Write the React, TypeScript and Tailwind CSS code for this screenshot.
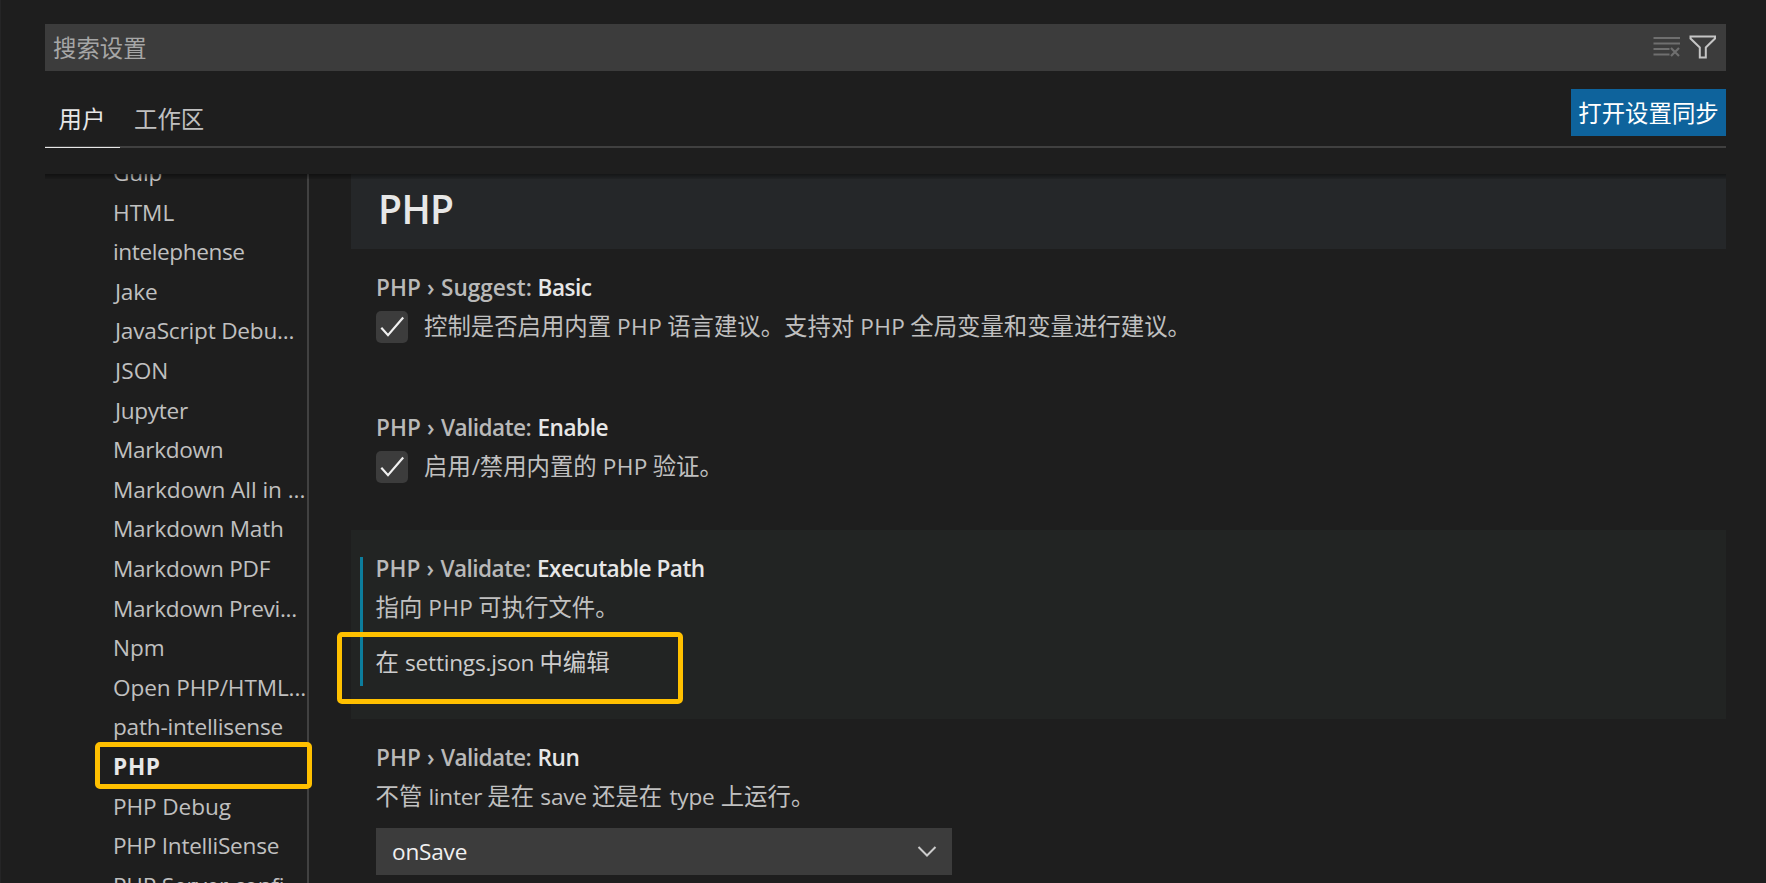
import type { ReactNode } from 'react';

const tocItems = [
  { label: 'Gulp', spacing: 'tracking-[-0.2px]' },
  { label: 'HTML', spacing: 'tracking-[0px]' },
  { label: 'intelephense', spacing: 'tracking-[-0.4px]' },
  { label: 'Jake', spacing: 'pl-[2px] tracking-[-0.2px]' },
  { label: 'JavaScript Debu...', spacing: 'pl-[2px] tracking-[-0.2px]' },
  { label: 'JSON', spacing: 'pl-[2px] tracking-[0.1px]' },
  { label: 'Jupyter', spacing: 'pl-[2px] tracking-[-0.3px]' },
  { label: 'Markdown', spacing: 'tracking-[-0.3px]' },
  { label: 'Markdown All in ...', spacing: 'tracking-[-0.06px]' },
  { label: 'Markdown Math', spacing: 'tracking-[-0.21px]' },
  { label: 'Markdown PDF', spacing: 'tracking-[-0.26px]' },
  { label: 'Markdown Previ...', spacing: 'tracking-[-0.3px]' },
  { label: 'Npm', spacing: 'tracking-[0px]' },
  { label: 'Open PHP/HTML...', spacing: 'tracking-[-0.12px]' },
  { label: 'path-intellisense', spacing: 'tracking-[-0.22px]' },
  { label: 'PHP', spacing: 'tracking-[0.7px]', selected: true },
  { label: 'PHP Debug', spacing: 'tracking-[-0.1px]' },
  { label: 'PHP IntelliSense', spacing: 'tracking-[-0.25px]' },
  { label: 'PHP Server confi...', spacing: 'tracking-[-0.22px]' },
];

function ClearIcon() {
  return (
    <svg width="28" height="24" viewBox="0 0 28 24" fill="none" stroke="#6f6f6f" strokeWidth="2">
      <path d="M0.5 3H27M0.5 8.5H27M0.5 14H16.5M0.5 19.5H16.5" />
      <path d="M18 13L26 21M26 13L18 21" strokeWidth="2.2" />
    </svg>
  );
}

function FilterIcon() {
  return (
    <svg width="28" height="24" viewBox="0 0 28 24" fill="none" stroke="#c5c5c5" strokeWidth="2">
      <path d="M1.5 1.5H26V3.5L16.8 12.5V22.5H10.8V12.5L1.5 3.5Z" />
    </svg>
  );
}

function Checkbox() {
  return (
    <span className="mt-1 flex size-8 shrink-0 rounded-[5px] bg-[#3c3c3c]">
      <svg width="32" height="32" viewBox="0 0 32 32" fill="none" stroke="#f0f0f0" strokeWidth="2.2">
        <path d="M5.3 16.7L12 24.2L27.2 6.5" />
      </svg>
    </span>
  );
}

function Latin({ width, children }: { width: string; children: ReactNode }) {
  return (
    <span className={`inline-block pl-px text-center text-[22.6px] ${width}`}>{children}</span>
  );
}

type TitleProps = { group: string; groupSpacing: string; name: string; spacing: string };

function Title({ group, groupSpacing, name, spacing }: TitleProps) {
  return (
    <h3 className="flex h-[38px] text-[22.6px] leading-[38px] font-semibold whitespace-nowrap text-[#b9b9b9]">
      <span className="w-[50px] tracking-[0.1px]">PHP</span>
      <span className="w-[15px] pl-px">›</span>
      <span className={`w-[96.5px] ${groupSpacing}`}>{group}</span>
      <span className={`text-[#e7e7e7] ${spacing}`}>{name}</span>
    </h3>
  );
}

export default function App() {
  return (
    <div className="relative flex h-[883px] w-[1766px] flex-col overflow-hidden border-l border-[#252526] bg-[#1e1e1e] pr-10 pl-11 font-['Open_Sans','Noto_Sans_CJK_SC',sans-serif] text-[23.4px] text-[#c0c0c0]">
      <div className="mt-6 flex h-[47px] shrink-0 items-center justify-between bg-[#3c3c3c] pr-[9px] pl-2">
        <span className="pt-px leading-[48px] text-[#a6a6a6]">搜索设置</span>
        <div className="flex items-center gap-2 pb-[2px]">
          <ClearIcon />
          <FilterIcon />
        </div>
      </div>

      <div className="flex h-[77px] shrink-0 justify-between border-b-2 border-[#404040]">
        <div className="flex pt-[21px]">
          <div className="-mb-[2px] w-[75px] border-b-[1.5px] border-[#e7e7e7] pl-[13.5px] leading-[54px] text-[#e7e7e7]">
            用户
          </div>
          <div className="pl-[14px] leading-[54px]">工作区</div>
        </div>
        <button className="mt-[18px] h-[47px] w-[155px] bg-[#0e639c] pt-px text-center leading-[47px] text-white">
          打开设置同步
        </button>
      </div>

      <div className="relative mt-[26px] flex h-[709px] overflow-hidden">
        <nav className="w-[264px] shrink-0 overflow-hidden border-r-2 border-[#414141] pl-[68px]">
          <ul className="-mt-[21px] text-[22.6px]">
            {tocItems.map((item) => (
              <li
                key={item.label}
                className={`h-[39.6px] leading-[39.6px] whitespace-nowrap ${item.spacing} ${item.selected ? 'font-bold text-[#e7e7e7]' : ''}`}
              >
                {item.label}
              </li>
            ))}
          </ul>
        </nav>

        <main className="ml-[42px] flex flex-1 flex-col whitespace-nowrap">
          <h2 className="h-[75px] shrink-0 bg-[#252729] pl-[27px] text-[39px] leading-[70px] font-semibold tracking-[-0.6px] text-[#e7e7e7]">
            PHP
          </h2>

          <section className="h-[140.5px] shrink-0 pt-[20px] pl-[25px]">
            <Title group="Suggest:" groupSpacing="tracking-[0px]" name="Basic" spacing="tracking-[-0.5px]" />
            <div className="flex gap-4 leading-[38px]">
              <Checkbox />
              <p className="h-[38px]">
                控制是否启用内置<Latin width="w-[56px] tracking-[0.4px]">PHP</Latin>语言建议。支持对
                <Latin width="w-[56px] tracking-[0.4px]">PHP</Latin>全局变量和变量进行建议。
              </p>
            </div>
          </section>

          <section className="h-[140.5px] shrink-0 pt-[19.5px] pl-[25px]">
            <Title group="Validate:" groupSpacing="tracking-[-0.55px]" name="Enable" spacing="tracking-[-0.5px]" />
            <div className="flex gap-4 leading-[38px]">
              <Checkbox />
              <p className="h-[38px]">
                启用<Latin width="w-[9px]">/</Latin>禁用内置的
                <Latin width="w-[56px] tracking-[0.4px]">PHP</Latin>验证。
              </p>
            </div>
          </section>

          <section className="relative h-[189px] shrink-0 bg-[#222423] pt-[20px] pl-[24.5px]">
            <div className="absolute top-[27px] left-[9px] h-[129px] w-[3px] bg-[#0c7d9d]" />
            <Title group="Validate:" groupSpacing="tracking-[-0.55px]" name="Executable Path" spacing="tracking-[-0.5px]" />
            <p className="h-[38px] leading-[38px]">
              指向<Latin width="w-[56px] tracking-[0.4px]">PHP</Latin>可执行文件。
            </p>
            <p className="mt-[17px] h-[38px] leading-[38px] text-[#cccccc]">
              在<Latin width="w-[140.5px] tracking-[-0.22px]">settings.json</Latin>中编辑
            </p>
          </section>

          <section className="shrink-0 pt-[20px] pl-[25px]">
            <Title group="Validate:" groupSpacing="tracking-[-0.55px]" name="Run" spacing="tracking-[-0.4px]" />
            <p className="-ml-[0.5px] h-[38px] leading-[38px]">
              不管<Latin width="w-[65px] tracking-[-0.25px]">linter</Latin>是在
              <Latin width="w-[58px] tracking-[-0.2px]">save</Latin>还是在
              <Latin width="w-[58.5px] tracking-[-0.2px]">type</Latin>上运行。
            </p>
            <div className="mt-[13px] flex h-[47px] w-[576px] items-center justify-between bg-[#3c3c3c] pr-[15px] pl-4 text-[22.6px] leading-[47px] tracking-[-0.2px] text-[#f0f0f0]">
              onSave
              <svg width="20" height="12" viewBox="0 0 20 12" fill="none" stroke="#cccccc" strokeWidth="2">
                <path d="M1.5 1L10 9.5L18.5 1" />
              </svg>
            </div>
          </section>
        </main>

        <div className="absolute inset-x-0 top-0 h-[5px] bg-linear-to-b from-black/45 to-black/10" />
      </div>

      <div className="absolute top-[632px] left-[336px] h-[72px] w-[346px] rounded-[5px] border-[5px] border-[#ffc000]" />
      <div className="absolute top-[742px] left-[94px] h-[47px] w-[217px] rounded-[5px] border-[5px] border-[#ffc000]" />
    </div>
  );
}
